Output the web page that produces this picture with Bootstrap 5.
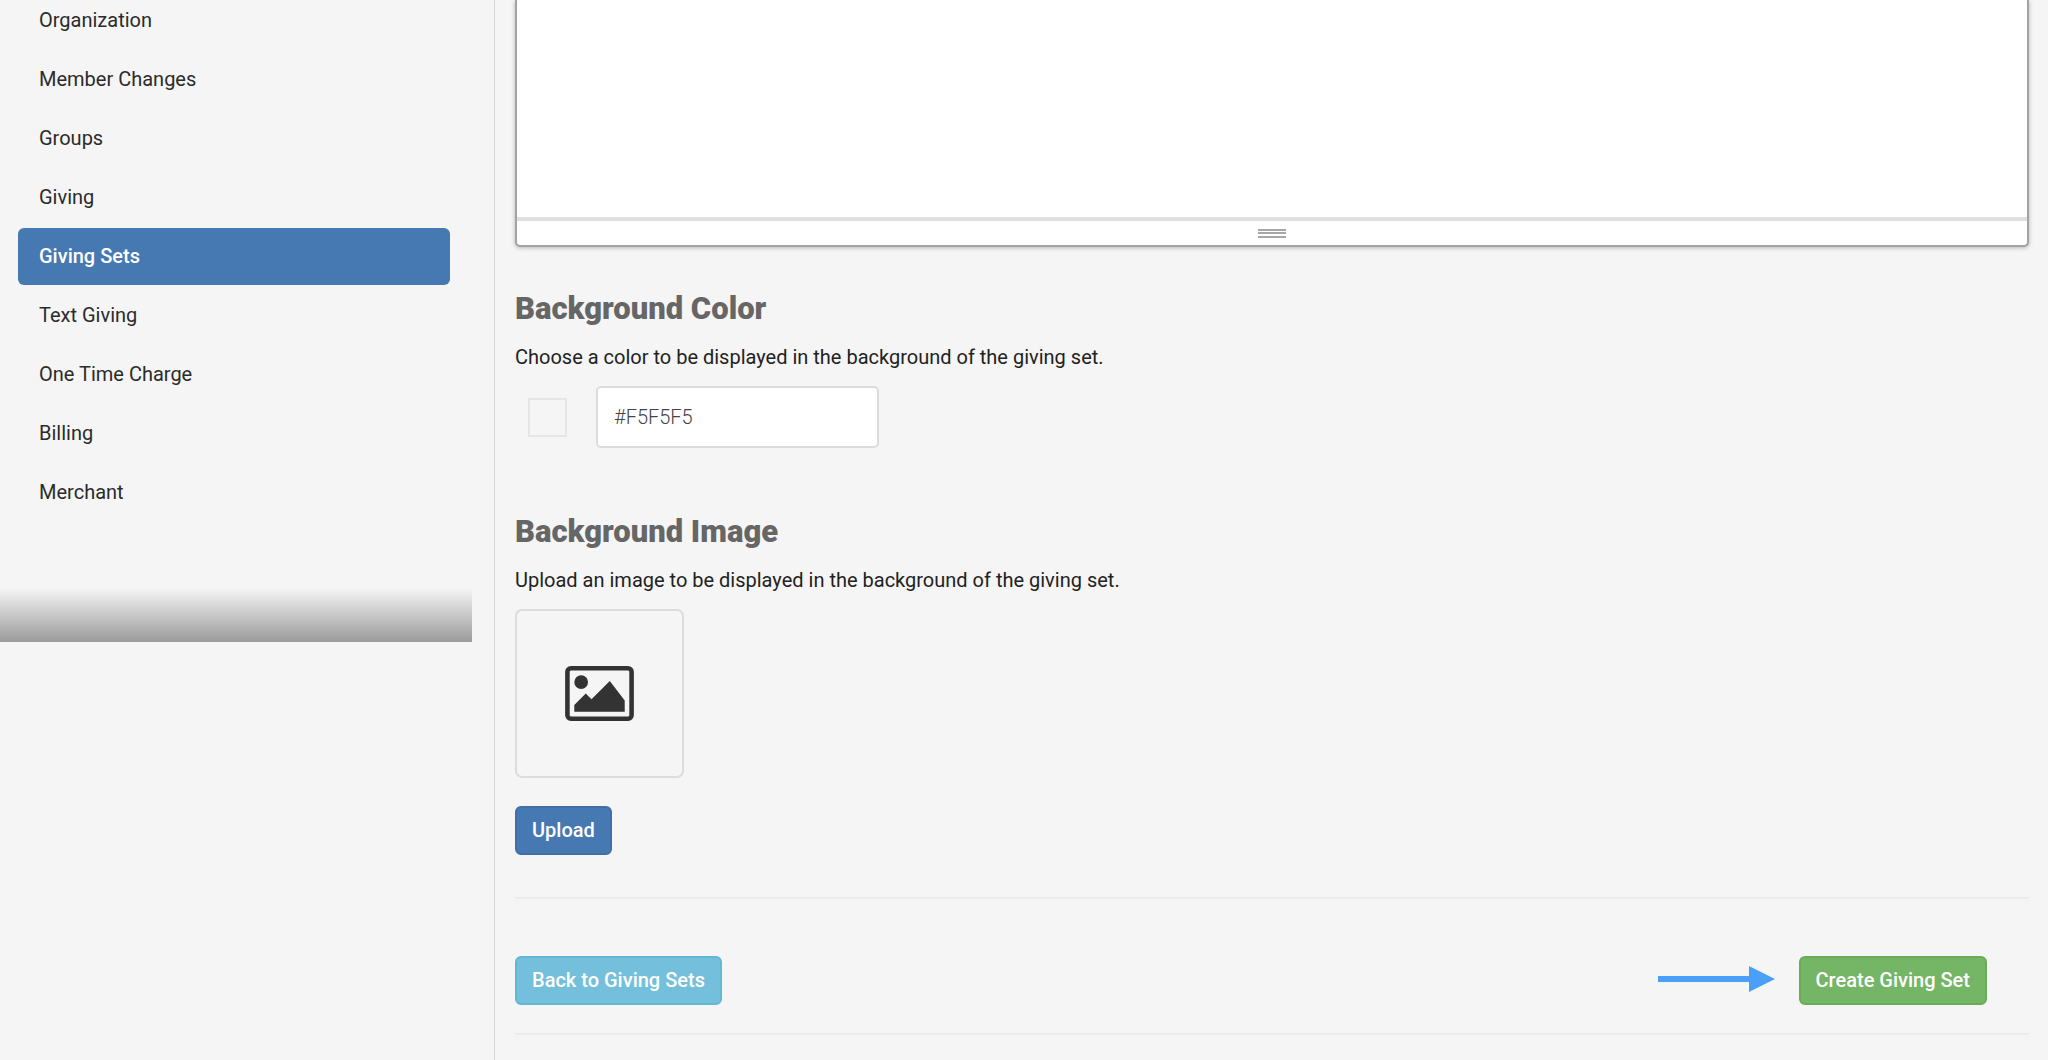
<!DOCTYPE html>
<html lang="en">
<head>
<meta charset="utf-8">
<meta name="viewport" content="width=device-width, initial-scale=1">
<title>Giving Sets</title>
<link href="https://cdn.jsdelivr.net/npm/bootstrap@5.3.0/dist/css/bootstrap.min.css" rel="stylesheet">
<style>
  body { background: #f5f5f5; color: #222; font: 400 20px/28px Roboto, "Liberation Sans", sans-serif; }
  .side-col { flex: 0 0 472px; }
  .main-col { border-left: 1px solid #d6d6d6; margin-left: 22px; padding: 0 19px 24px 20px; min-width: 0; }
  .side-nav { margin-top: -8px; padding: 0 22px 0 18px; gap: 2px; --bs-nav-pills-border-radius: 6px; --bs-nav-pills-link-active-bg: #4678b2; }
  .side-nav .nav-link { color: #2b2b2b; font-size: 20px; line-height: 28px; padding: 14px 21px 15px; }
  .side-nav .nav-link.active { color: #fff; font-weight: 500; }
  .side-fade { height: 54px; margin-top: 67px; background: linear-gradient(#f5f5f5, #c8c8c8 50%, #9b9b9b); }
  .editor { border: 2px solid #a3a3a3; border-top: 0; border-radius: 0 0 5px 5px; box-shadow: 0 1px 4px rgba(0,0,0,.25); }
  .editor textarea { height: 217px; resize: none; border-radius: 0; }
  .editor-grip { border-top: 4px solid #e0e0e0; height: 28px; }
  .section-title { color: #666; font-size: 31px; line-height: 40px; font-weight: 900; margin: 42px 0 14px; }
  .hint { margin-bottom: 15px; }
  .swatch { width: 39px; height: 39px; border: 2px solid #e6e6e6; background: #f5f5f5; margin: 0 29px 0 13px; }
  .hex-input { width: 283px; height: 62px; border: 2px solid #dcdcdc; border-radius: 5px; padding: 0 16px; font-size: 20px; font-weight: 300; color: #444; }
  .section-image { margin-top: 64px; }
  .preview { width: 169px; height: 169px; border: 2px solid #dcdcdc; border-radius: 7px; margin-bottom: 28px; color: #333; }
  .act { --bs-btn-font-size: 20px; --bs-btn-line-height: 29px; --bs-btn-padding-y: 8px; --bs-btn-padding-x: 15px; --bs-btn-border-width: 2px; --bs-btn-border-radius: 6px; --bs-btn-font-weight: 500; --bs-btn-color: #fff; }
  .act-blue { --bs-btn-bg: #4678b2; --bs-btn-border-color: #3f6fa8; }
  .act-sky { --bs-btn-bg: #74bfdb; --bs-btn-border-color: #64b6d5; }
  .act-green { --bs-btn-bg: #74b566; --bs-btn-border-color: #68ac5a; }
  .rule { border-top: 2px solid #ebebeb; opacity: 1; margin: 0; }
  .section-image + .rule { margin-top: 42px; }
  .foot { padding: 57px 42px 28px 0; }
</style>
<script src="https://cdn.jsdelivr.net/npm/bootstrap@5.3.0/dist/js/bootstrap.bundle.min.js" defer></script>
</head>
<body>
<div class="d-flex min-vh-100 overflow-hidden">
  <aside class="side-col">
    <nav class="side-nav nav nav-pills flex-column" aria-label="Settings">
      <a class="nav-link" href="#">Organization</a>
      <a class="nav-link" href="#">Member Changes</a>
      <a class="nav-link" href="#">Groups</a>
      <a class="nav-link" href="#">Giving</a>
      <a class="nav-link active" aria-current="page" href="#">Giving Sets</a>
      <a class="nav-link" href="#">Text Giving</a>
      <a class="nav-link" href="#">One Time Charge</a>
      <a class="nav-link" href="#">Billing</a>
      <a class="nav-link" href="#">Merchant</a>
    </nav>
    <div class="side-fade"></div>
  </aside>
  <main class="main-col flex-grow-1">
    <div class="editor bg-white overflow-hidden">
      <textarea class="form-control border-0 d-block" aria-label="Description"></textarea>
      <div class="editor-grip d-flex align-items-center justify-content-center">
        <svg width="28" height="9" viewBox="0 0 28 9" fill="#a6a6a6" aria-hidden="true"><path d="M0 0h28v2H0zM0 3h28v2H0zM0 7h28v2H0z"/></svg>
      </div>
    </div>
    <section>
      <h2 class="section-title">Background Color</h2>
      <label class="hint d-block" for="hex">Choose a color to be displayed in the background of the giving set.</label>
      <div class="d-flex align-items-center">
        <span class="swatch"></span>
        <input class="hex-input" id="hex" type="text" value="#F5F5F5">
      </div>
    </section>
    <section class="section-image">
      <h2 class="section-title">Background Image</h2>
      <p class="hint">Upload an image to be displayed in the background of the giving set.</p>
      <div class="preview d-flex align-items-center justify-content-center">
        <svg width="69" height="55" viewBox="0 0 1920 1536" fill="currentColor" role="img" aria-label="No image"><path d="M640 448q0 80-56 136t-136 56-136-56-56-136 56-136 136-56 136 56 56 136zM1664 960v320H256v-192l320-320 160 160 512-512zM1760 128H160q-13 0-22.500 9.500T128 160v1216q0 13 9.500 22.500t22.500 9.500h1600q13 0 22.500-9.500t9.500-22.500V160q0-13-9.500-22.500T1760 128zM1920 160v1216q0 66-47 113t-113 47H160q-66 0-113-47T0 1376V160Q0 94 47 47T160 0h1600q66 0 113 47t47 113z"/></svg>
      </div>
      <button type="button" class="btn act act-blue d-block">Upload</button>
    </section>
    <hr class="rule">
    <div class="foot d-flex align-items-center">
      <a href="#" class="btn act act-sky">Back to Giving Sets</a>
      <svg class="ms-auto me-4 mb-1" width="117" height="26" viewBox="0 0 117 26" fill="#4a9ff8" aria-hidden="true"><path d="M0 10h91V0l26 13-26 13V16H0z"/></svg>
      <button type="button" class="btn act act-green">Create Giving Set</button>
    </div>
    <hr class="rule">
  </main>
</div>
</body>
</html>
